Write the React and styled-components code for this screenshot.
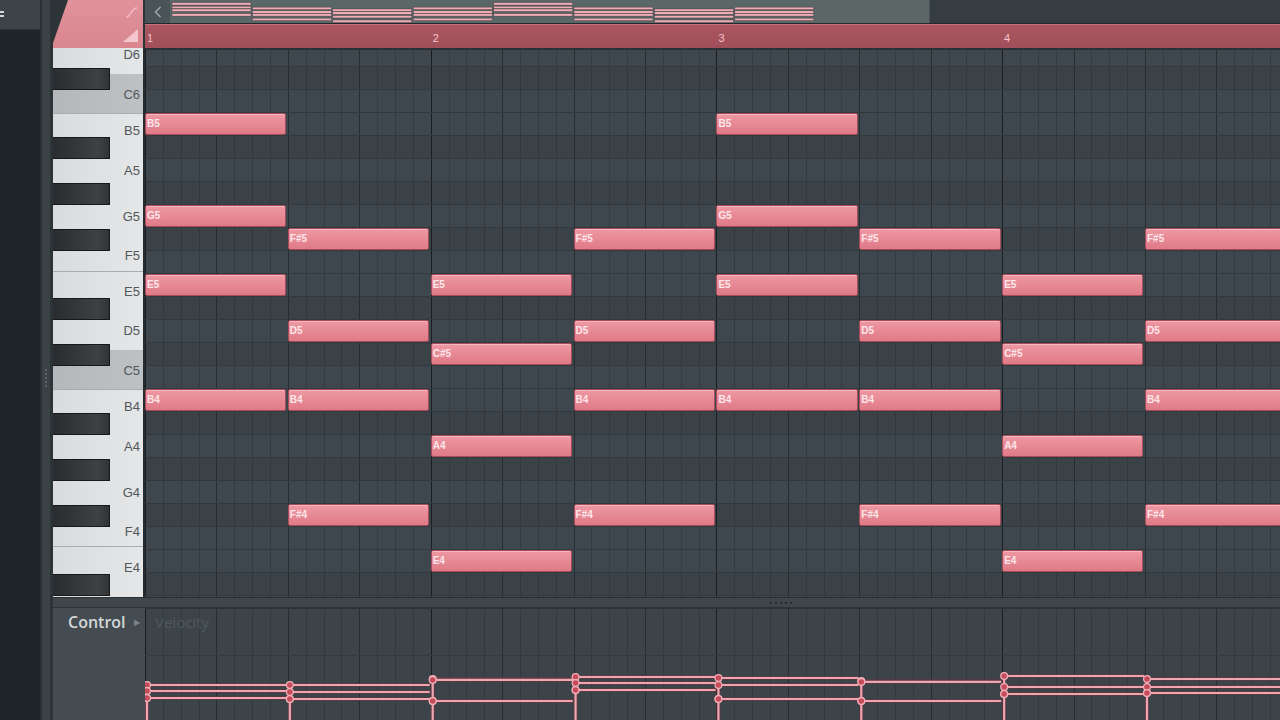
import React from 'react';
import styled, { createGlobalStyle, css } from 'styled-components';

const BAR = 285.714;
const BEAT = BAR / 4;
const STEP = BAR / 16;
const HALF = BAR / 2;
const ROW = 23;
const WHITE_H = (ROW * 12) / 7;

const GlobalStyle = createGlobalStyle`
  html, body { margin: 0; padding: 0; background: #1f2528; }
  body { font-family: "Open Sans", "Liberation Sans", sans-serif; overflow: hidden; }
  * { box-sizing: border-box; }
`;

const gridLines = css`
  background-image:
    repeating-linear-gradient(90deg, rgba(22, 26, 29, 0.8) 0 1px, transparent 1px ${BAR}px),
    repeating-linear-gradient(90deg, rgba(26, 31, 34, 0.5) 0 1px, transparent 1px ${BEAT}px),
    repeating-linear-gradient(90deg, rgba(30, 35, 39, 0.32) 0 1px, transparent 1px ${STEP}px);
`;

const Screen = styled.div`
  display: flex;
  width: 1280px;
  height: 720px;
  overflow: hidden;
  background: #3a4247;
`;

const Dock = styled.div`
  width: 40px;
  flex-shrink: 0;
  display: flex;
  flex-direction: column;
  background: #1f2528;
`;

const DockTop = styled.div`
  height: 30px;
  background: #3c4448;
  border-bottom: 1px solid #2a3034;
  padding-top: 11px;
`;

const DockGlyph = styled.div`
  width: 4px;
  height: 2px;
  background: #cfd4d6;
  box-shadow: 0 4px 0 #cfd4d6;
`;

const Splitter = styled.div`
  width: 13px;
  flex-shrink: 0;
  background: #3a4246;
  border-left: 2px solid #2b3236;
  border-right: 3px solid #2d3438;
  display: flex;
  justify-content: center;
  padding-top: 369px;
`;

const Grip = styled.div`
  display: flex;
  flex-direction: column;
  gap: 2px;
`;

const GripDot = styled.div`
  width: 2px;
  height: 2px;
  background: #5a6368;
`;

const Main = styled.div`
  flex: 1;
  display: flex;
  flex-direction: column;
  min-width: 0;
`;

const Header = styled.div`
  height: 48px;
  flex-shrink: 0;
  display: flex;
  background: #2d3438;
`;

const Corner = styled.div`
  width: 90px;
  flex-shrink: 0;
  margin-right: 2px;
  background: linear-gradient(180deg, #e0929c, #d9868f);
  clip-path: polygon(0 43px, 15px 0, 100% 0, 100% 100%, 0 100%);
  display: flex;
  flex-direction: column;
  align-items: flex-end;
  justify-content: space-between;
  padding: 7px 5px 6px 0;
`;

const HeaderRight = styled.div`
  flex: 1;
  min-width: 0;
  overflow: hidden;
  display: flex;
  flex-direction: column;
`;

const Toolbar = styled.div`
  height: 24px;
  flex-shrink: 0;
  display: flex;
  border-bottom: 1px solid #22282b;
`;

const NavButton = styled.div`
  width: 25px;
  flex-shrink: 0;
  background: #4a5457;
  display: flex;
  align-items: center;
  justify-content: center;
  color: #a4abae;
`;

const Preview = styled.div`
  width: 760px;
  flex-shrink: 0;
  background: #5b6667;
  border-right: 1px solid #4a5456;
  display: flex;
`;

const ToolbarRest = styled.div`
  flex: 1;
  background: #353d41;
`;

const Ruler = styled.div`
  flex: 1;
  display: flex;
  background: linear-gradient(180deg, #ab5661, #a04e59);
  border-top: 1px solid #c2707a;
`;

const BarCell = styled.div`
  width: ${BAR}px;
  flex-shrink: 0;
  padding: 7px 0 0 2px;
  font: 11px "Liberation Sans", sans-serif;
  color: #f5c3ca;
`;

const Editor = styled.div`
  height: 549px;
  flex-shrink: 0;
  display: flex;
`;

const Keyboard = styled.div`
  width: 92px;
  flex-shrink: 0;
  position: relative;
  overflow: hidden;
  background: #e1e3e4;
  border-right: 2px solid #252b2e;
`;

const WhiteKeys = styled.div`
  margin-top: -13px;
  display: flex;
  flex-direction: column;
`;

const WhiteKey = styled.div`
  height: ${WHITE_H}px;
  flex-shrink: 0;
  display: flex;
  justify-content: flex-end;
  align-items: flex-end;
  padding-right: 3px;
  padding-bottom: ${(p) => p.$lift}px;
  background: ${(p) =>
    p.$c
      ? 'linear-gradient(90deg, #b5b8ba, #bec1c3)'
      : 'linear-gradient(90deg, #d9dcdd, #e4e6e7)'};
  border-bottom: ${(p) => (p.$edge ? '1px solid #a9adb0' : 'none')};
  font: 13px "Liberation Sans", sans-serif;
  line-height: 13px;
  color: #51575b;
`;

const BlackKey = styled.div`
  position: absolute;
  left: 0;
  width: 57px;
  height: 22px;
  background: linear-gradient(90deg, #2a2d2f, #3e4143 80%, #313436);
  border: 1px solid #16181a;
  border-left: none;
`;

const Grid = styled.div`
  flex: 1;
  min-width: 0;
  overflow: hidden;
  border-top: 2px solid #2a3034;
`;

const GridInner = styled.div`
  position: relative;
  margin-top: -6px;
`;

const GridRow = styled.div`
  height: ${ROW}px;
  background-color: ${(p) => (p.$black ? '#3a4248' : '#3e474d')};
  border-bottom: 1px solid #32393e;
  ${gridLines}
`;

const Note = styled.div`
  position: absolute;
  height: 22px;
  width: ${HALF - 1.5}px;
  background: linear-gradient(180deg, #ee98a3, #df7a87);
  border: 1px solid #a84c59;
  border-radius: 2px;
  box-shadow: inset 0 1px 0 rgba(255, 255, 255, 0.3);
  padding-left: 1px;
  font: bold 10px "Liberation Sans", sans-serif;
  line-height: 20px;
  color: #fde6ea;
`;

const Divider = styled.div`
  height: 11px;
  flex-shrink: 0;
  background: #3e464b;
  border-top: 1px solid #2a3034;
  border-bottom: 1px solid #2c3338;
  display: flex;
  align-items: center;
  gap: 3px;
  padding-left: 717px;
`;

const DividerDot = styled.div`
  width: 2px;
  height: 2px;
  background: #262c30;
`;

const Control = styled.div`
  flex: 1;
  display: flex;
  min-height: 0;
`;

const ControlSide = styled.div`
  width: 92px;
  flex-shrink: 0;
  background: #444c51;
  padding: 3px 0 0 15px;
  display: flex;
  align-items: flex-start;
  gap: 8px;
`;

const ControlLabel = styled.span`
  font: 600 16px "Open Sans", "Liberation Sans", sans-serif;
  color: #d3d7d9;
  line-height: 22px;
`;

const ControlArrow = styled.span`
  font-size: 8px;
  line-height: 22px;
  color: #7e868a;
`;

const Chart = styled.div`
  flex: 1;
  min-width: 0;
  position: relative;
  overflow: hidden;
  background-color: #3c444a;
  ${gridLines}
  border-top: 1px solid #2c3337;
  padding: 2px 0 0 10px;
`;

const ChartRule = styled.div`
  position: absolute;
  left: 0;
  right: 0;
  top: 46px;
  height: 1px;
  background: #343b40;
`;

const ChartLabel = styled.div`
  font: 15px "Open Sans", "Liberation Sans", sans-serif;
  color: #4f585d;
  line-height: 22px;
`;

const ChartSvg = styled.svg`
  position: absolute;
  left: 0;
  top: 0;
`;

const ROWS = ['D6', 'C#6', 'C6', 'B5', 'A#5', 'A5', 'G#5', 'G5', 'F#5', 'F5', 'E5', 'D#5', 'D5', 'C#5', 'C5', 'B4', 'A#4', 'A4', 'G#4', 'G4', 'F#4', 'F4', 'E4', 'D#4', 'D4'];
const rowOf = (n) => ROWS.indexOf(n);

// the last key (D4) is cut off by the bottom edge, so it carries no label
const WHITES = ['D6', 'C6', 'B5', 'A5', 'G5', 'F5', 'E5', 'D5', 'C5', 'B4', 'A4', 'G4', 'F4', 'E4', 'D4'];
const LIFT = { C: 11.5, D: 13, E: 12.5, F: 8.5, G: 9.5, A: 16, B: 16 };

const COLUMNS = [
  ['B5', 'G5', 'E5', 'B4'],
  ['F#5', 'D5', 'B4', 'F#4'],
  ['E5', 'C#5', 'A4', 'E4'],
  ['F#5', 'D5', 'B4', 'F#4'],
  ['B5', 'G5', 'E5', 'B4'],
  ['F#5', 'D5', 'B4', 'F#4'],
  ['E5', 'C#5', 'A4', 'E4'],
  ['F#5', 'D5', 'B4', 'F#4'],
];

// velocity heights (absolute screen y of each note's handle)
const VELOCITY = [
  [684, 690, 697, 697],
  [684, 691, 698, 698],
  [678, 679, 700, 700],
  [676, 682, 689, 689],
  [677, 684, 698, 698],
  [680, 681, 700, 700],
  [675, 686, 693, 693],
  [678, 686, 692, 692],
];

const CurveIcon = () => (
  <svg width="13" height="11" viewBox="0 0 13 11">
    <path d="M1 10 C6 10 6 1 12 1" fill="none" stroke="#f3bcc3" strokeWidth="1.6" />
  </svg>
);

const RampIcon = () => (
  <svg width="15" height="13" viewBox="0 0 15 13">
    <polygon points="0,13 15,0 15,13" fill="#f3c7cd" />
  </svg>
);

const PreviewStrip = () => (
  <svg width="760" height="23">
    {COLUMNS.map((col, k) =>
      col.map((n) => (
        <rect
          key={k + n}
          x={2 + k * 80.4}
          y={2.5 + (rowOf(n) - 3) * 0.92}
          width={79}
          height={2.6}
          fill="#f2acb6"
          stroke="#3b3f40"
          strokeWidth="0.5"
        />
      ))
    )}
  </svg>
);

const VelocityChart = () => {
  const H = 112;
  return (
    <ChartSvg width="1135" height={H}>
      {VELOCITY.map((vals, k) => {
        const x0 = k * HALF + 2;
        const top = Math.min(...vals) - 608;
        return (
          <g key={k}>
            {vals.map((v, j) => (
              <g key={j}>
                <line x1={x0} y1={v - 608} x2={x0 + HALF - 3} y2={v - 608} stroke="#5d3a41" strokeWidth="3.6" />
                <line x1={x0} y1={v - 608} x2={x0 + HALF - 3} y2={v - 608} stroke="#f0a6b0" strokeWidth="1.8" />
              </g>
            ))}
            <line x1={x0} y1={top} x2={x0} y2={H} stroke="#5d3a41" strokeWidth="4" />
            <line x1={x0} y1={top} x2={x0} y2={H} stroke="#f0a6b0" strokeWidth="2.2" />
            {vals.map((v, j) => (
              <circle key={j} cx={x0} cy={v - 608} r="3.4" fill="#c54c5b" stroke="#f3b0b9" strokeWidth="1.2" />
            ))}
          </g>
        );
      })}
    </ChartSvg>
  );
};

export default function App() {
  return (
    <>
      <GlobalStyle />
      <Screen>
        <Dock>
          <DockTop>
            <DockGlyph />
          </DockTop>
        </Dock>
        <Splitter>
          <Grip>
            {[0, 1, 2, 3, 4].map((i) => (
              <GripDot key={i} />
            ))}
          </Grip>
        </Splitter>
        <Main>
          <Header>
            <Corner>
              <CurveIcon />
              <RampIcon />
            </Corner>
            <HeaderRight>
              <Toolbar>
                <NavButton>
                  <svg width="8" height="12" viewBox="0 0 8 12">
                    <path d="M6.5 1 L1.5 6 L6.5 11" fill="none" stroke="currentColor" strokeWidth="1.4" />
                  </svg>
                </NavButton>
                <Preview>
                  <PreviewStrip />
                </Preview>
                <ToolbarRest />
              </Toolbar>
              <Ruler>
                {[1, 2, 3, 4].map((n) => (
                  <BarCell key={n}>{n}</BarCell>
                ))}
              </Ruler>
            </HeaderRight>
          </Header>

          <Editor>
            <Keyboard>
              <WhiteKeys>
                {WHITES.map((k, i) => (
                  <WhiteKey key={k} $c={k[0] === 'C'} $edge={k[0] === 'F' || k[0] === 'C'} $lift={LIFT[k[0]]}>
                    {i < WHITES.length - 1 ? k : ''}
                  </WhiteKey>
                ))}
              </WhiteKeys>
              {ROWS.map((n, i) =>
                n.includes('#') ? <BlackKey key={n} style={{ top: ROW * i - 3.5 }} /> : null
              )}
            </Keyboard>
            <Grid>
              <GridInner>
                {ROWS.map((n) => (
                  <GridRow key={n} $black={n.includes('#')} />
                ))}
                {COLUMNS.map((col, k) =>
                  col.map((n) => (
                    <Note key={k + n} style={{ left: k * HALF, top: rowOf(n) * ROW }}>
                      {n}
                    </Note>
                  ))
                )}
              </GridInner>
            </Grid>
          </Editor>

          <Divider>
            {[0, 1, 2, 3, 4].map((i) => (
              <DividerDot key={i} />
            ))}
          </Divider>

          <Control>
            <ControlSide>
              <ControlLabel>Control</ControlLabel>
              <ControlArrow>▶</ControlArrow>
            </ControlSide>
            <Chart>
              <ChartRule />
              <ChartLabel>Velocity</ChartLabel>
              <VelocityChart />
            </Chart>
          </Control>
        </Main>
      </Screen>
    </>
  );
}
